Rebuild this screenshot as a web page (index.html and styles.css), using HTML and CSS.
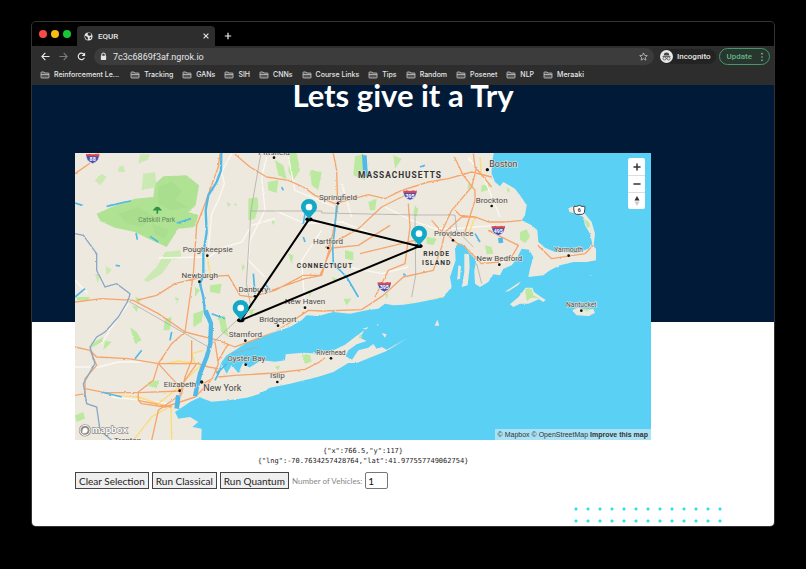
FILE: index.html
```html
<!DOCTYPE html>
<html lang="en">
<head>
<meta charset="utf-8">
<title>EQUR</title>
<link rel="stylesheet" href="styles.css">
</head>
<body>
<svg class="defs" width="0" height="0" aria-hidden="true">
  <symbol id="folder" viewBox="0 0 20 16"><path d="M2 13V3q0-1 1-1h5l2 2h7q1 0 1 1v8q0 1-1 1H3q-1 0-1-1zM2 7h16" fill="#555" stroke="#c4c4c4" stroke-width="1.6"/></symbol>
</svg>
<div class="window">
  <header class="chrome">
    <div class="tabs">
      <div class="lights"><i class="red"></i><i class="yellow"></i><i class="green"></i></div>
      <div class="tab">
        <svg class="globe" viewBox="0 0 18 18"><circle cx="9" cy="9" r="8" fill="#e4e4e4"/><path d="M2 8l4 1 2 3-1 4-3-2-2-4zM8 2l5 0 2 4-3 2-3-1-2-2zM12 10l3 1-2 3-2-1z" fill="#2d2d2e"/></svg>
        <span>EQUR</span>
        <button class="icon close" aria-label="Close tab"><svg viewBox="0 0 10 10"><path d="M2 2l6 6M8 2L2 8" stroke="#ddd" stroke-width="1.5"/></svg></button>
      </div>
      <button class="icon plus" aria-label="New tab"><svg viewBox="0 0 10 10"><path d="M5 1v8M1 5h8" stroke="#eee" stroke-width="1.5"/></svg></button>
    </div>
    <div class="toolbar">
      <button class="icon nav" aria-label="Back"><svg viewBox="0 0 10 10"><path d="M9.500 5H1M4.800 1L1 5l3.800 4" fill="none" stroke="#e8e8e8" stroke-width="1.300"/></svg></button>
      <button class="icon nav" aria-label="Forward"><svg viewBox="0 0 10 10"><path d="M.5 5H9M5.200 1L9 5 5.200 9" fill="none" stroke="#7b7b7b" stroke-width="1.300"/></svg></button>
      <button class="icon nav" aria-label="Reload"><svg viewBox="0 0 10 10"><path d="M8.200 6.500A3.600 3.600 0 1 1 7.800 2.700" fill="none" stroke="#e8e8e8" stroke-width="1.300"/><path d="M9 .5v4H5z" fill="#e8e8e8"/></svg></button>
      <div class="address">
        <svg class="lock" viewBox="0 0 8 10"><path d="M2 5V3a2 2 0 0 1 4 0v2" fill="none" stroke="#e4e4e4" stroke-width="1.200"/><rect x="1" y="4" width="6" height="5" rx="1" fill="#e4e4e4"/></svg>
        <input class="url" aria-label="Address" value="7c3c6869f3af.ngrok.io">
        <svg class="star" viewBox="0 0 20 20"><path d="M10 2l2.500 5.500 6 .6-4.500 4 1.300 6L10 15l-5.300 3.100 1.300-6-4.500-4 6-.6z" fill="none" stroke="#c8c8c8" stroke-width="1.700"/></svg>
      </div>
      <div class="incognito">
        <svg viewBox="0 0 26 26"><circle cx="13" cy="13" r="13" fill="#e8e8e8"/><path d="M9 6q4-2 8 0l2 5H7zM5 12h16v1.500H5z" fill="#444"/><circle cx="9" cy="17" r="3" fill="none" stroke="#444" stroke-width="1.500"/><circle cx="17" cy="17" r="3" fill="none" stroke="#444" stroke-width="1.500"/><path d="M12 16.500h2" stroke="#444" stroke-width="1.500"/></svg>
        <span>Incognito</span>
      </div>
      <button class="update"><span>Update</span><svg viewBox="0 0 4 12"><circle cx="2" cy="2" r="1"/><circle cx="2" cy="6" r="1"/><circle cx="2" cy="10" r="1"/></svg></button>
    </div>
    <nav class="bookmarks" aria-label="Bookmarks">
      <a href="#" class="wide"><svg><use href="#folder"/></svg>Reinforcement Le...</a>
      <a href="#"><svg><use href="#folder"/></svg>Tracking</a>
      <a href="#"><svg><use href="#folder"/></svg>GANs</a>
      <a href="#"><svg><use href="#folder"/></svg>SIH</a>
      <a href="#"><svg><use href="#folder"/></svg>CNNs</a>
      <a href="#"><svg><use href="#folder"/></svg>Course Links</a>
      <a href="#"><svg><use href="#folder"/></svg>Tips</a>
      <a href="#"><svg><use href="#folder"/></svg>Random</a>
      <a href="#"><svg><use href="#folder"/></svg>Posenet</a>
      <a href="#"><svg><use href="#folder"/></svg>NLP</a>
      <a href="#"><svg><use href="#folder"/></svg>Meraaki</a>
    </nav>
  </header>
  <main class="page">
    <h1>Lets give it a Try</h1>
    <div class="content">
      <div class="map">
        <svg class="canvas" viewBox="0 8 1728 862" role="img" aria-label="Map of southern New England and New York">
          <defs>
            <filter id="rough" x="0" y="0" width="1" height="1"><feTurbulence type="fractalNoise" baseFrequency=".09" numOctaves="2" seed="4"/><feDisplacementMap in="SourceGraphic" scale="6" xChannelSelector="R" yChannelSelector="G"/></filter>
            <clipPath id="inland"><path d="M0 0H1255L1245 40 1260 95 1320 115 1355 165 1340 210 1387 240 1390 275 1440 305 1505 308 1552 280 1525 200 1483 185 1500 168 1550 215 1563 330 1455 345 1360 380 1360 300 1310 345 1215 410 1195 320 1145 290 1125 380 1110 440 955 465 825 490 695 495 585 550 480 600 430 660 375 740 300 785 370 820 378 870H0z"/></clipPath>
            <g id="shield"><path d="M-19-12q5 3 9 0 10 4 20 0 4 3 9 0 4 20-19 29Q-23 8-19-12z" fill="#4b50b0" stroke="#f5f1ee" stroke-width="2"/><path d="M-20-13q5 3 10 0 10 4 20 0 5 3 10 0v8h-40z" fill="#d94a50"/></g>
            <g id="pin"><ellipse cx="0" cy="37" rx="11" ry="6" fill="#000"/><path d="M0 37C-8 22-24 14-24 0a24 24 0 0 1 48 0C24 14 8 22 0 37z" fill="#12a9c6"/><circle r="10" fill="#fff"/></g>
          </defs>
          <rect width="1728" height="880" fill="#5ad0f5"/>
          <g filter="url(#rough)">
            <g fill="#eee9df">
              <path d="M-20-20H1262L1250 40 1250 70 1260 95 1275 108 1285 95 1320 115 1335 135 1355 165 1350 195 1340 210 1370 225 1387 240 1390 275 1410 292 1440 305 1475 305 1505 308 1540 295 1552 280 1545 250 1530 225 1525 200 1505 190 1483 185 1480 172 1500 168 1525 185 1550 215 1560 250 1556 285 1563 300 1563 330 1535 335 1495 335 1455 345 1425 360 1405 375 1360 380 1365 355 1375 320 1362 298 1340 295 1325 325 1310 345 1285 355 1275 375 1255 372 1240 395 1215 410 1200 400 1198 360 1204 330 1180 305 1170 285 1150 278 1140 292 1142 330 1125 380 1130 410 1105 440 1085 445 1025 457 985 463 955 465 930 460 910 475 875 480 825 490 775 485 730 497 695 495 680 510 645 530 615 540 585 550 545 565 510 580 480 600 455 615 440 635 430 660 410 675 385 705 375 740 345 755 300 785 310 805 345 800 370 815 352 830 380 835 378 900H-20z"/>
              <path d="M374 740L378 702 400 675 430 665 440 642 455 670 470 644 490 668 505 636 522 652 560 630 600 634 630 630 632 612 685 607 735 610 775 600 810 583 840 560 868 540 855 562 875 572 845 582 820 600 812 617 830 630 850 600 880 592 895 580 905 596 920 590 935 598 998 563 935 602 890 620 845 638 820 638 775 665 735 678 715 683 645 700 585 712 550 732 515 742 460 750 410 754 385 745z"/>
              <path d="M1168 310L1182 312 1184 350 1178 405 1160 410 1168 365zM1150 345L1158 348 1155 385 1147 390zM1305 462L1330 441 1352 412 1372 412 1377 425 1395 438 1412 449 1405 455 1392 447 1360 460 1335 460 1315 470zM1490 480L1508 472 1540 478 1555 475 1560 488 1540 497 1505 495zM1079 526L1087 508 1093 526zM1290 424L1320 405 1337 393 1330 404 1300 423zM1545 375L1549 373 1548 377zM920 548L935 552 930 562zM861 536L880 530 875 537zM905 522L912 523 907 526z"/>
            </g>
            <g clip-path="url(#inland)" fill="#bce9a0">
              <path fill="#b0e294" d="M65 190L110 170 180 145 235 140 240 100 265 78 335 75 372 105 362 165 340 185 370 195 360 230 310 235 275 290 220 265 180 245 120 232 75 212z"/>
              <path fill="#a3d98a" opacity=".5" d="M250 110L290 95 320 120 300 150 340 170 290 180 250 160zM130 190L190 170 240 200 200 230 150 215zM230 220L280 240 270 265 240 250z"/>
              <path opacity=".7" d="M270 305L315 300 320 320 290 330 260 370 220 395 205 390 245 350zM205 70L240 65 245 110 200 120zM130 50L145 45 150 65 130 65zM195 12H225L218 28 190 40zM60 90L80 70 95 80 75 105zM60 370L75 375 68 400zM90 345L110 360 95 375z"/>
              <path d="M520 145L548 140 550 170 540 205 520 210zM578 95L610 90 605 128 580 120zM405 405L440 400 435 430 405 425zM360 410L375 420 360 440zM455 155L467 160 460 170zM600 30L625 45 635 85 610 75zM645 8H665L675 60 655 90 640 65zM840 18L870 12 870 90 835 75zM705 60L740 65 730 120 710 105zM880 155L905 145 900 180 885 180zM810 300L835 305 835 330 810 325zM955 15L980 25 960 55zM1020 165L1030 175 1025 200 1015 190zM1055 260L1085 265 1075 285 1055 280zM1180 100L1190 100 1185 115 1178 115zM1220 105L1245 102 1240 118 1218 125zM1335 245L1355 237 1365 258 1350 278 1335 268zM1230 285L1250 290 1255 310 1235 312zM1295 110L1305 118 1298 128zM1525 205L1542 215 1545 230 1528 232z"/>
              <path d="M270 505L290 500 285 540 265 540zM220 695L252 690 245 713 220 707zM165 530L185 545 200 570 180 580zM90 570L110 575 85 600zM50 580L85 560 80 575 45 595zM355 490L385 480 380 515 355 530zM430 500L450 495 460 560 440 545zM520 480L540 475 530 500zM0 795L25 785 30 805 5 815zM180 440L200 445 190 460zM170 465L190 470 185 485zM5 440H45L40 450 5 450zM805 445L830 445 815 465zM770 380L785 385 780 400zM640 310L655 315 650 345zM500 340L510 350 502 362zM478 158L486 162 480 168zM590 210L600 215 594 225zM300 440L312 445 305 460zM700 420L710 425 704 440zM930 430L940 432 935 445z"/>
            </g>
            <path fill="#bce9a0" d="M680 615L705 613 710 635 690 640zM1350 420L1370 415 1375 435 1395 445 1370 442 1355 450zM1527 475L1545 474 1540 483 1525 483zM600 650L615 645 610 660zM855 550L862 560 850 565z"/>
            <g clip-path="url(#inland)" fill="none" stroke="#fbf8f2" stroke-width="4">
              <path d="M470 10L440 65 448 100 430 150 410 190 400 300M250 323L400 320 450 290 500 275 530 225 600 205M575 20L560 80 570 180 525 270 520 330 570 380M600 180L690 220 800 215 930 265M740 240L680 330 690 470M800 100L830 200M0 650L70 650 130 635 200 635M0 390L40 430M930 170L1010 210 1080 235 1140 235 1260 225M1180 20L1230 90 1275 200M1000 350L920 370 820 350M640 20L660 120 780 170M80 580L110 530 160 460M110 740L200 750 280 760M1200 330L1290 335"/>
            </g>
            <g clip-path="url(#inland)" fill="none" stroke="#fbdc74" stroke-width="4">
              <path d="M395 310L405 370M130 735L190 740 250 760 300 720 330 690 378 645M270 640L310 632 370 640M175 870L230 800 290 765M288 770L290 870M1215 20L1220 80M1200 200L1185 240 1170 260M360 640L350 610 385 600M370 390L385 440M1110 440L1040 455 990 460"/>
            </g>
            <g clip-path="url(#inland)" fill="none" stroke="#f6a56d" stroke-width="4" stroke-linejoin="round">
              <path d="M0 70L50 35 70 8M435 10L430 50 415 90 390 160 365 225 360 300 355 370 345 440 330 545 290 580 250 640 235 690 190 725 190 750 290 770M480 12L525 50 575 80 640 90 685 110 720 135 780 160 880 133 930 145 980 120 1060 95 1120 85 1190 65 1250 80M775 10L785 60 788 170 775 240 765 290 740 375 690 385 590 420M185 450L245 435 300 400 380 380 460 375 495 435 530 440 600 420 685 375 735 375 770 293 850 285 945 225M750 292L850 235 920 170 1010 125M1000 160L1005 230 990 340 940 360 900 440M855 310L1020 270M600 545L640 520 700 480 740 482 860 478 925 435 985 380 1075 360 1100 290 1110 245 1135 270 1155 285M1100 245L1130 180 1190 110 1205 50M1070 210L1105 250 1160 200 1200 200 1240 215 1290 215 1340 210M1140 180L1155 195 1200 200M1240 240L1330 285 1310 320 1270 335 1220 340 1160 280M1388 285L1430 325 1530 310 1555 285M1138 20L1165 75 1200 120 1200 150 1170 245M1195 10L1200 50 1250 110"/>
              <path d="M0 455L80 445 175 450 250 490 330 545 430 570 480 590 600 545M0 590L45 600 65 620 160 625 250 640 370 640 400 650 430 655M45 600L65 645 30 685 30 730 0 735M30 715L90 727 190 727 315 722M250 640L310 705 315 730M190 750L200 760 270 770 360 740M350 570L350 630 330 680 320 730 250 780 230 870M420 575L430 640 410 690 360 740M365 640L330 690 315 725M460 580L430 630M1240 240L1270 250"/>
              <path d="M420 695L480 675 600 670 700 655 735 630 750 620M420 655L440 690 450 715M385 700L420 680"/>
            </g>
            <path d="M430 680L480 675 600 668 690 657 730 637 750 622" fill="none" stroke="#f6a56d" stroke-width="4"/>
            <g fill="none" stroke="#50b9e8" stroke-linejoin="round">
              <path stroke-width="7" d="M439 8L438 60 425 95 400 135 392 180 395 245 385 310 385 375 375 400 385 440 390 490 405 515"/><path stroke-width="13" d="M392 480L408 520 406 580 395 620 375 670 360 738"/>
              <path stroke-width="5" d="M95 168L130 160 150 155 168 152M305 218L325 212 348 205M225 258L250 275M183 248L187 268M0 158L22 165M0 440L30 415M122 345L135 347M180 625L200 600M285 570L290 545M785 165L780 230 773 290 775 340 815 380 850 440M690 190L685 220M1035 50L1050 45M1200 250L1215 275M535 370L540 430M570 400L585 420M620 110L625 120M685 260L690 275M985 370L992 375M410 490L450 505M425 670L455 640M440 650L420 690M80 725L140 740"/>
              <path stroke-width="14" d="M868 15L872 80M1276 262L1278 278M310 735L305 775"/>
            </g>
            <g fill="none" stroke="#8aa8c6" stroke-width="4"><path d="M0 250L25 255 65 310 65 360 90 410 125 400 165 430 160 450 130 500 90 545 65 560 45 590 60 640 25 700 35 760 65 770 75 840 110 870"/></g>
          </g>
          <path d="M558 8L527 185 525 230 514 400 528 470 400 590M525 182H740V188L1020 194H1140L1145 240 1195 290M1020 194L1022 375 1010 440M160 452L400 590M1205 340L1220 400M470 610L550 590" fill="none" stroke="#aaa9a7" stroke-width="3" opacity=".75"/>
          <g class="label">
            <text x="245" y="216" class="park">Catskill Park</text>
          </g>
          <path d="M247 190V180M238 178q9-12 18 0z" stroke="#2e9443" stroke-width="5" fill="#2e9443"/>
          <g fill="#111">
            <circle cx="397" cy="316" r="4"/><circle cx="373" cy="394" r="4"/><circle cx="540" cy="438" r="4"/><circle cx="597" cy="22" r="4"/><circle cx="789" cy="159" r="4"/><circle cx="759" cy="293" r="4"/><circle cx="1134" cy="270" r="4"/><circle cx="1237" cy="58" r="5"/><circle cx="1250" cy="167" r="4"/><circle cx="1273" cy="343" r="4"/><circle cx="1481" cy="316" r="4"/><circle cx="1519" cy="481" r="4"/><circle cx="690" cy="472" r="4"/><circle cx="609" cy="526" r="4"/><circle cx="511" cy="571" r="4"/><circle cx="512" cy="643" r="4"/><circle cx="314" cy="721" r="4"/><circle cx="380" cy="695" r="5"/><circle cx="607" cy="695" r="4"/><circle cx="768" cy="624" r="4"/>
          </g>
          <g class="label">
            <text x="597" y="13">Pittsfield</text><text x="398" y="305">Poughkeepsie</text><text x="374" y="384">Newburgh</text><text x="535" y="426">Danbury</text>
            <text x="789" y="149">Springfield</text><text x="759" y="280">Hartford</text><text x="1136" y="257">Providence</text><text x="1285" y="49" class="city">Boston</text>
            <text x="1250" y="157">Brockton</text><text x="1273" y="332">New Bedford</text><text x="1481" y="306" class="town">Yarmouth</text><text x="1519" y="470" class="town">Nantucket</text>
            <text x="690" y="460">New Haven</text><text x="609" y="515">Bridgeport</text><text x="511" y="559">Stamford</text><text x="514" y="632">Oyster Bay</text>
            <text x="315" y="710">Elizabeth</text><text x="442" y="721" class="city">New York</text><text x="607" y="684">Islip</text><text x="768" y="614" class="town">Riverhead</text><text x="158" y="878">Trenton</text>
            <text x="975" y="82" class="state big">MASSACHUSETTS</text><text x="750" y="354" class="state">CONNECTICUT</text><text x="1085" y="318" class="state">RHODE</text><text x="1085" y="343" class="state">ISLAND</text>
          </g>
          <use href="#shield" x="53" y="23"/><use href="#shield" x="1005" y="133"/><use href="#shield" x="928" y="408"/><use href="#shield" x="1270" y="239"/>
          <g class="route"><text x="53" y="31">88</text><text x="1005" y="142">395</text><text x="928" y="417">395</text><text x="1270" y="248">495</text></g>
          <path d="M1497 168q8 2 16-3 8 5 16 3 2 5 0 11 2 10-7 13h-18q-9-3-7-13-2-6 0-11z" fill="#fff" stroke="#444" stroke-width="3"/><text x="1513" y="186" class="six">6</text>
          <path d="M702 207L1032 288 497 510z" fill="none" stroke="#000" stroke-width="6" stroke-linejoin="round"/>
          <use href="#pin" x="702" y="170"/><use href="#pin" x="1032" y="250"/><use href="#pin" x="497" y="473"/>
          <g class="logo"><circle cx="30" cy="840" r="15" fill="none" stroke="#8e8c88" stroke-width="7"/><circle cx="30" cy="840" r="15" fill="#8e8c88" stroke="#fff" stroke-width="3"/><path d="M22 849q-1-16 8-17 9 1 8 9-2 9-16 8z" fill="#fff"/><text x="51" y="849">mapbox</text></g>
        </svg>
        <div class="zoom">
          <button aria-label="Zoom in"><svg viewBox="0 0 10 10"><path d="M5 2v6M2 5h6" stroke="#333" stroke-width="1.500" stroke-linecap="round"/></svg></button>
          <button aria-label="Zoom out"><svg viewBox="0 0 10 10"><path d="M2 5h6" stroke="#333" stroke-width="1.500" stroke-linecap="round"/></svg></button>
          <button aria-label="Reset north"><svg viewBox="0 0 10 10"><path d="M5 0l2.500 4.500h-5z" fill="#333"/><path d="M5 10l2.500-4.500h-5z" fill="#ccc"/></svg></button>
        </div>
        <div class="credits"><a href="#">© Mapbox</a> <a href="#">© OpenStreetMap</a> <a href="#" class="improve">Improve this map</a></div>
      </div>
      <pre class="coords">{"x":766.5,"y":117}
{"lng":-70.7634257428764,"lat":41.977557749062754}</pre>
      <form class="controls">
        <button type="button">Clear Selection</button>
        <button type="button">Run Classical</button>
        <button type="button">Run Quantum</button>
        <label for="vehicles">Number of Vehicles:</label>
        <input id="vehicles" type="text" inputmode="numeric" value="1">
      </form>
    </div>
    <div class="dots"></div>
  </main>
</div>
</body>
</html>
```
FILE: styles.css
```css
* { box-sizing: border-box; }
body {
  margin: 0;
  padding: 22px 32px 43px;
  min-height: 100vh;
  display: flex;
  background: #000;
  font-family: Roboto, "Liberation Sans", sans-serif;
}
button, input { font: inherit; margin: 0; padding: 0; border: 0; background: none; color: inherit; }
a { color: inherit; text-decoration: none; }
svg { display: block; }
.defs { position: absolute; }
.window {
  flex: 1;
  min-width: 0;
  display: flex;
  flex-direction: column;
  border-radius: 4px;
  overflow: hidden;
  box-shadow: 0 0 0 1px #333;
}

/* Browser chrome */
.chrome { background: #2d2d2e; color: #e6e6e6; font-size: 8px; font-weight: 500; }
.tabs { display: flex; height: 24px; background: #000; }
.lights { display: flex; align-items: center; gap: 4px; width: 45px; padding-left: 7px; }
.lights i { width: 8px; height: 8px; border-radius: 50%; }
.red { background: #fb4b45; }
.yellow { background: #fbbc12; }
.green { background: #18c832; }
.tab {
  display: flex;
  align-items: center;
  gap: 5px;
  width: 138px;
  margin-top: 4px;
  padding: 0 5px 0 7px;
  background: #2d2d2e;
  border-radius: 4px 4px 0 0;
}
.globe { width: 9px; height: 9px; }
.icon { display: grid; place-items: center; }
.icon svg { width: 8px; height: 8px; }
.close { margin-left: auto; }
.plus { margin: 4px 0 0 9px; }
.toolbar { display: flex; align-items: center; height: 21px; padding: 0 4px 0 8px; }
.nav { width: 10px; margin-right: 8px; }
.nav svg { width: 9px; height: 9px; }
.address {
  flex: 1;
  display: flex;
  align-items: center;
  gap: 6px;
  height: 17px;
  padding: 0 6px;
  border-radius: 9px;
  background: #3c3c3d;
}
.lock { width: 7px; height: 9px; }
.url { flex: 1; min-width: 0; height: 14px; font-size: 9px; font-weight: 400; }
.star { width: 9px; height: 9px; }
.incognito {
  display: flex;
  align-items: center;
  gap: 4px;
  height: 15px;
  margin: 0 3px 0 6px;
  padding-right: 5px;
  border-radius: 8px;
  background: #232324;
}
.incognito svg { width: 13px; height: 13px; }
.update {
  display: flex;
  align-items: center;
  gap: 8px;
  height: 17px;
  padding: 0 5px 0 7px;
  border: 1px solid #45986a;
  border-radius: 9px;
  color: #62b786;
  background: #28362f;
}
.update svg { width: 4px; height: 10px; fill: #81c995; }
.bookmarks { display: flex; gap: 9px; height: 18px; padding: 0 8px 3px; overflow: hidden; }
.bookmarks a { display: flex; align-items: center; gap: 4px; white-space: nowrap; font-family: Inter, sans-serif; font-size: 7px; }
.bookmarks .wide { padding-right: 2px; }
.bookmarks svg { width: 10px; height: 8px; }

/* Page */
.page {
  flex: 1;
  display: flex;
  flex-direction: column;
  background: linear-gradient(#001a38 237px, #fff 237px);
  font-family: Lato, sans-serif;
}
h1 { margin: 0; height: 68px; line-height: 21px; font-size: 31px; font-weight: 700; text-align: center; color: #fff; }
.content { margin: 0 123px 0 43px; }
.map { position: relative; }
.canvas { width: 100%; }
.label { font-family: Roboto, sans-serif; font-size: 24px; text-anchor: middle; fill: #4c4c4c; stroke: #eee9df; stroke-width: 3px; paint-order: stroke; }
.label .park { font-size: 20px; fill: #5e8c5b; stroke: none; }
.label .town { font-size: 20px; }
.label .city { font-size: 27px; fill: #444; }
.label .state { font-size: 20px; font-weight: 700; letter-spacing: 3px; fill: #333; }
.label .big { font-size: 25px; }
.route { font: 700 16px Roboto, sans-serif; text-anchor: middle; fill: #fff; }
.six { font: 700 16px Roboto, sans-serif; text-anchor: middle; fill: #333; }
.logo text { font: 700 30px Lato, sans-serif; fill: #fff; stroke: #8e8c88; stroke-width: 4px; paint-order: stroke; }
.zoom {
  position: absolute;
  top: 5px;
  right: 6px;
  width: 17px;
  border-radius: 2px;
  background: #fff;
}
.zoom button { display: grid; place-items: center; width: 100%; height: 17px; }
.zoom button + button { border-top: 1px solid #ddd; }
.zoom svg { width: 10px; height: 10px; }
.credits {
  position: absolute;
  right: 0;
  bottom: 0;
  padding: 0 3px;
  background: #a9e2f5;
  color: #333;
  font: 7px/11px "Liberation Sans", sans-serif;
  white-space: nowrap;
}
.improve { font-weight: 700; }
.coords { margin: 6px 0; font: 7px/10px "DejaVu Sans Mono", monospace; text-align: center; color: #222; }
.controls { display: flex; align-items: center; gap: 3px; font-size: 10px; }
.controls button { height: 17px; padding: 0 3px; border: 1px solid #444; background: #efefef; color: #222; }
.controls label { color: #888; font-size: 8px; }
.controls input { width: 23px; height: 17px; padding: 0 2px; border: 1px solid #777; border-radius: 2px; background: #fff; color: #111; }
.dots {
  width: 156px;
  height: 23px;
  margin: auto 48px 0 auto;
  background: radial-gradient(circle, #2fe0dc 1px, transparent 2px) 0 0 / 12px 12px;
}
```
